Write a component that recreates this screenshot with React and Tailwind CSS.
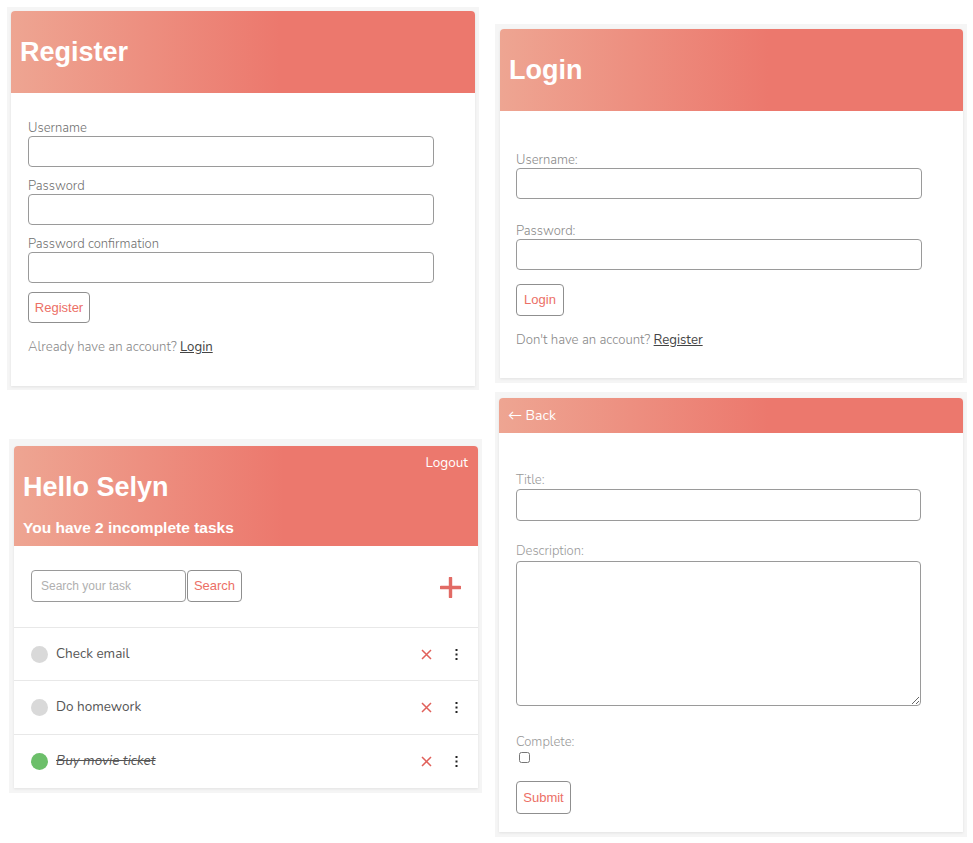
import { useState } from "react";

const header = "bg-[linear-gradient(to_right,#eea592,#ec786d_58%)]";
const body = "font-['Nunito','Lato','Open_Sans',sans-serif] font-light";
const arial = "font-['Liberation_Sans',Arial,sans-serif]";
const inputCls = "block w-full border border-[#9a9a9a] rounded-[4px] bg-white outline-none";
const btnCls = `border border-[#8f8f8f] rounded-[4px] bg-white text-[13px] text-[#ec6f66] ${arial}`;
const labelCls = "block text-[13px] pt-[1px] leading-[16px]";
const formLabelCls = "block text-[13px] pt-[2px] leading-[15px] text-[#999]";

function Frame({ className, cardClass, children }) {
  return (
    <div className={`bg-[#f5f5f5] ${className}`}>
      <div className={`bg-white rounded-t-[4px] shadow-[0_1px_3px_rgba(0,0,0,0.08)] overflow-hidden ${cardClass}`}>
        {children}
      </div>
    </div>
  );
}

function Field({ label, labelColor, mt, h = "h-[31px]" }) {
  return (
    <div className={mt}>
      <label className={`${labelCls} ${labelColor}`}>{label}</label>
      <input className={`${inputCls} ${h}`} />
    </div>
  );
}

function RegisterCard() {
  return (
    <Frame className="p-[4px]" cardClass="h-[375px]">
      <div className={`${header} h-[82px] flex items-center px-[9px]`}>
        <h1 className={`${arial} text-white font-bold text-[27px]`}>Register</h1>
      </div>
      <div className={`${body} pl-[17px] pr-[41px] pt-[26px]`}>
        <Field label="Username" labelColor="text-[#707070]" />
        <Field label="Password" labelColor="text-[#707070]" mt="mt-[10px]" />
        <Field label="Password confirmation" labelColor="text-[#707070]" mt="mt-[10px]" />
        <button className={`${btnCls} mt-[9px] w-[62px] h-[31px]`}>Register</button>
        <p className="mt-[15px] pt-[1px] text-[13.2px] leading-[16px] text-[#888]">
          Already have an account?{" "}
          <a className="underline text-[#444] font-normal">Login</a>
        </p>
      </div>
    </Frame>
  );
}

function LoginCard() {
  return (
    <Frame className="pl-[5px] pr-[4px] py-[5px]" cardClass="h-[349px]">
      <div className={`${header} h-[82px] flex items-center px-[9px]`}>
        <h1 className={`${arial} text-white font-bold text-[27px]`}>Login</h1>
      </div>
      <div className={`${body} pl-[16px] pr-[41px] pt-[40px]`}>
        <Field label="Username:" labelColor="text-[#8a8a8a]" />
        <Field label="Password:" labelColor="text-[#8a8a8a]" mt="mt-[23px]" />
        <button className={`${btnCls} mt-[14px] w-[48px] h-[32px]`}>Login</button>
        <p className="mt-[15px] pt-[1px] text-[13.2px] leading-[16px] text-[#888]">
          Don't have an account?{" "}
          <a className="underline text-[#444] font-normal">Register</a>
        </p>
      </div>
    </Frame>
  );
}

function Plus() {
  return (
    <svg width="21" height="21" viewBox="0 0 21 21">
      <path d="M10.5 1v19M1 10.5h19" stroke="#e26b65" strokeWidth="3.4" strokeLinecap="round" />
    </svg>
  );
}

function Cross() {
  return (
    <svg width="11" height="11" viewBox="0 0 11 11">
      <path d="M1 1l9 9M10 1l-9 9" stroke="#e0605a" strokeWidth="1.5" />
    </svg>
  );
}

function Dots() {
  return (
    <svg width="3" height="11" viewBox="0 0 3 11">
      <rect x="0.5" y="0" width="2" height="2" fill="#222" />
      <rect x="0.5" y="4.5" width="2" height="2" fill="#222" />
      <rect x="0.5" y="9" width="2" height="2" fill="#222" />
    </svg>
  );
}

const tasks = [
  { title: "Check email", done: false },
  { title: "Do homework", done: false },
  { title: "Buy movie ticket", done: true },
];

function TaskRow({ task, h }) {
  return (
    <div className={`flex items-center border-t border-[#e8e8e8] pl-[17px] pr-[20px] ${h}`}>
      <span className={`w-[17px] h-[17px] rounded-full ${task.done ? "bg-[#6cbf6a]" : "bg-[#d9d9d9]"}`} />
      <span className={`ml-[8px] text-[13.5px] text-[#555] font-normal ${task.done ? "line-through italic" : ""}`}>
        {task.title}
      </span>
      <span className="ml-auto flex items-center">
        <Cross />
        <span className="ml-[23px] flex"><Dots /></span>
      </span>
    </div>
  );
}

function TaskList() {
  const [query, setQuery] = useState("");
  const incomplete = tasks.filter((t) => !t.done).length;
  return (
    <Frame className="ml-[2px] w-[473px] pl-[5px] pr-[4px] pt-[7px] pb-[5px]" cardClass="h-[342px]">
      <div className={`${header} h-[100px] px-[9px] pt-[9px] pb-[8px] text-white`}>
        <div className={`${body} font-normal flex justify-end h-[16px] text-[13.5px] leading-[16px] pr-[1px]`}>Logout</div>
        <h1 className={`${arial} font-bold text-[27px] leading-[32px]`}>Hello Selyn</h1>
        <p className={`${arial} font-bold text-[15.5px] leading-[20px] mt-[15px]`}>
          You have {incomplete} incomplete tasks
        </p>
      </div>
      <div className={`${body} flex items-center pl-[17px] pr-[17px] pt-[24px] pb-[25px]`}>
        <input
          value={query}
          onChange={(e) => setQuery(e.target.value)}
          placeholder="Search your task"
          className={`w-[155px] h-[32px] border border-[#9a9a9a] rounded-[4px] pl-[9px] text-[12px] ${arial} placeholder:text-[#b0b0b0] outline-none`}
        />
        <button className={`${btnCls} ml-[1px] w-[55px] h-[32px]`}>Search</button>
        <span className="ml-auto mt-[2px] flex"><Plus /></span>
      </div>
      <div className={body}>
        <TaskRow task={tasks[0]} h="h-[53px]" />
        <TaskRow task={tasks[1]} h="h-[54px]" />
        <TaskRow task={tasks[2]} h="h-[54px]" />
      </div>
    </Frame>
  );
}

function TaskForm() {
  return (
    <Frame className="mt-[9px] pl-[4px] pr-[4px] pt-[6px] pb-[5px]" cardClass="h-[434px]">
      <div className={`${header} h-[35px] flex items-center px-[9px]`}>
        <span className={`${body} font-normal text-white text-[14px]`}>← Back</span>
      </div>
      <div className={`${body} pl-[17px] pr-[42px] pt-[38px]`}>
        <label className={formLabelCls}>Title:</label>
        <input className={`${inputCls} h-[32px] mt-[1px]`} />
        <label className={`${formLabelCls} mt-[21px]`}>Description:</label>
        <textarea className={`${inputCls} h-[145px] mt-[2px]`} />
        <label className={`${formLabelCls} mt-[27px]`}>Complete:</label>
        <input type="checkbox" className="block ml-[3px] mt-[2px] w-[11px] h-[11px]" />
        <button className={`${btnCls} mt-[18px] w-[55px] h-[33px]`}>Submit</button>
      </div>
    </Frame>
  );
}

export default function App() {
  return (
    <div className="w-[973px] h-[843px] bg-white flex overflow-hidden">
      <div className="ml-[7px] w-[475px] pt-[7px] flex flex-col">
        <div className="w-[472px]"><RegisterCard /></div>
        <div className="mt-[49px]"><TaskList /></div>
      </div>
      <div className="ml-[13px] w-[472px] pt-[24px] flex flex-col">
        <LoginCard />
        <TaskForm />
      </div>
    </div>
  );
}
